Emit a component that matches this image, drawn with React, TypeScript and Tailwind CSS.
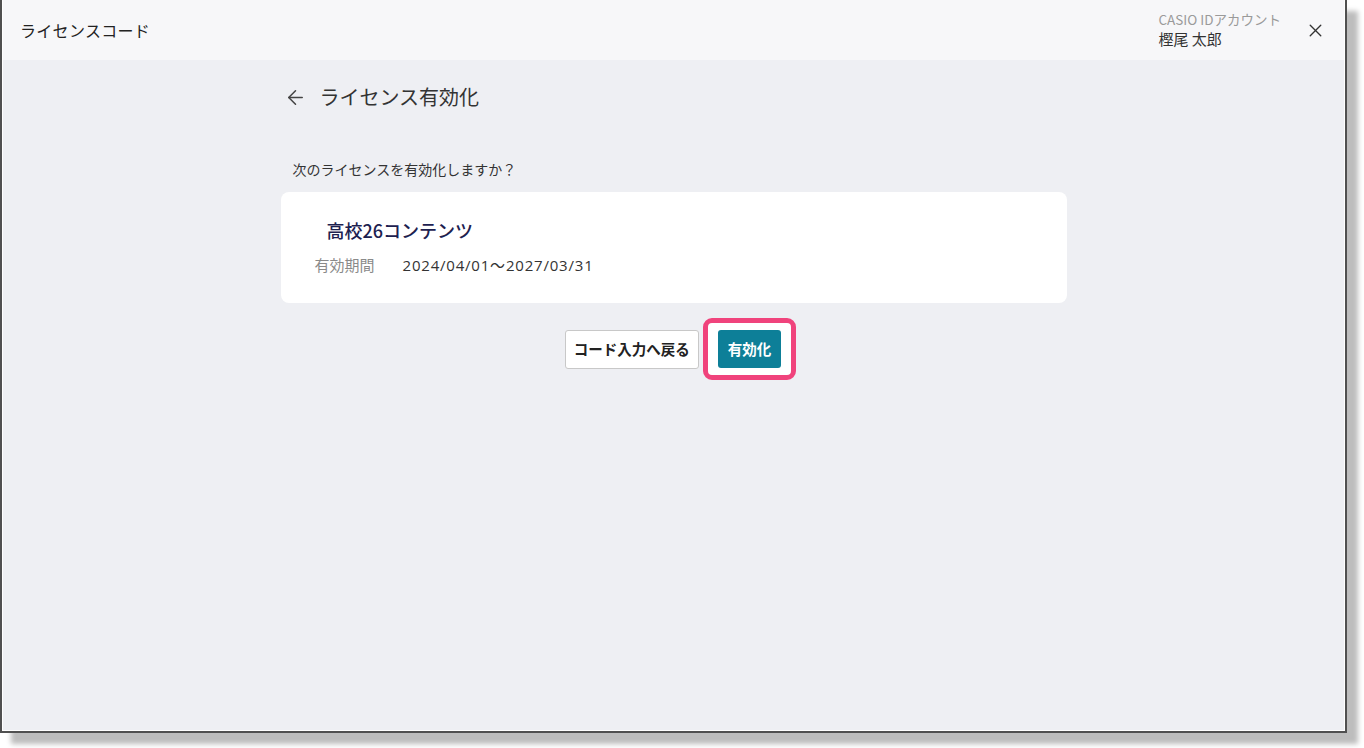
import { ArrowLeft, X } from "lucide-react";

export default function App() {
  return (
    <div
      className="w-[1364px] h-[748px] bg-white overflow-hidden"
      style={{ fontFamily: '"Noto Sans CJK JP", "Noto Sans", sans-serif' }}
    >
      {/* window frame */}
      <div className="w-[1347px] h-[733px] border-x-2 border-b-2 border-[#505050] shadow-[11px_11px_5px_#bdbdbd]">
        <div className="h-full flex flex-col border-x border-b border-white bg-[#eeeff3]">
          {/* header */}
          <div className="h-[60px] shrink-0 bg-[#f7f7f9] flex items-center justify-between pl-[17px] pr-[18px]">
            <h1 className="text-[16px] text-[#222] tracking-[0.3px]">ライセンスコード</h1>
            <div className="flex items-center gap-[24px]">
              <div className="flex flex-col mt-[-2px]">
                <span className="text-[13.5px] leading-[19px] text-[#9a9a9a]">CASIO IDアカウント</span>
                <span className="text-[15px] leading-[20px] text-[#333]">樫尾 太郎</span>
              </div>
              <X className="w-[21px] h-[21px] text-[#333]" strokeWidth={1.6} />
            </div>
          </div>

          {/* body */}
          <div className="flex-1 flex justify-center">
            <div className="w-[786px] flex flex-col">
              <div className="flex items-center gap-[13px] pl-[3px] h-[74px]">
                <ArrowLeft className="w-[23px] h-[23px] text-[#444]" strokeWidth={1.6} />
                <h2 className="text-[20px] text-[#333]">ライセンス有効化</h2>
              </div>
              <p className="pl-[12px] mt-[25px] text-[14px] text-[#333] leading-[20px]">
                次のライセンスを有効化しますか？
              </p>
              <div className="mt-[13px] h-[111px] bg-white rounded-[8px] flex flex-col pt-[25px]">
                <div className="pl-[46px] text-[18px] font-medium text-[#1d2150] leading-[26px]">高校26コンテンツ</div>
                <div className="pl-[34px] mt-[12px] flex items-center leading-[20px]">
                  <span className="text-[#8a8a8a] text-[15px] w-[88px]">有効期間</span>
                  <span
                    className="text-[#333] text-[15px] tracking-[0.8px]"
                    style={{ fontFamily: '"Open Sans", "Noto Sans CJK JP", sans-serif' }}
                  >
                    2024/04/01～2027/03/31
                  </span>
                </div>
              </div>
              <div className="mt-[15px] flex justify-center items-center gap-[4px] pl-[14px]">
                <button className="h-[39px] px-[8px] bg-white border border-[#c8c8c8] rounded-[3px] text-[14.5px] font-bold text-[#222]">
                  コード入力へ戻る
                </button>
                <div className="px-[10px] py-[7px] border-[5px] border-[#f0437c] rounded-[9px] bg-white">
                  <button className="h-[38px] px-[10px] bg-[#0d7f98] rounded-[3px] text-[14.5px] font-bold text-white">
                    有効化
                  </button>
                </div>
              </div>
            </div>
          </div>
        </div>
      </div>
    </div>
  );
}
